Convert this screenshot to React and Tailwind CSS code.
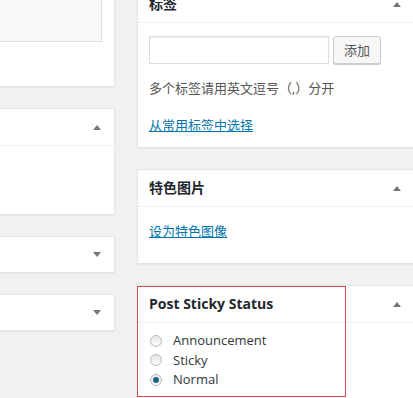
import React from "react";

const font = { fontFamily: '"Open Sans", "Noto Sans CJK SC", sans-serif' };

function Arrow({ up = true }) {
  return up ? (
    <span className="block w-0 h-0 border-x-[4px] border-x-transparent border-b-[5px] border-b-[#72777c]" />
  ) : (
    <span className="block w-0 h-0 border-x-[4px] border-x-transparent border-t-[5px] border-t-[#72777c]" />
  );
}

function Header({ title, up = true, pr = "pr-[15px]" }) {
  return (
    <div className={`h-[37px] border-b border-[#eeeeee] flex items-center justify-between pl-[11px] ${pr}`}>
      <h2 className="text-[14px] font-bold text-[#23282d] leading-none">{title}</h2>
      <Arrow up={up} />
    </div>
  );
}

function Radio({ label, checked }) {
  return (
    <label className="flex items-center h-[19.5px] text-[13px] text-[#32373c]">
      <span className="w-[12px] h-[12px] rounded-full border border-[#b4b9be] bg-gradient-to-b from-[#e6e6e6] to-[#ffffff] flex items-center justify-center shrink-0">
        {checked && <span className="w-[6px] h-[6px] rounded-full bg-[#1e5f8c]" />}
      </span>
      <span className="ml-[11px]">{label}</span>
    </label>
  );
}

export default function App() {
  return (
    <div className="w-[413px] h-[398px] overflow-hidden bg-[#f1f1f1] flex" style={font}>
      {/* left column */}
      <div className="w-[115px] shrink-0 mt-[-20px] flex flex-col gap-[21px]">
        <div className="bg-white border-y border-r border-[#e5e5e5] shadow-[0_1px_1px_rgba(0,0,0,0.04)] pr-[12px] pt-[10px] pb-[44px]">
          <div className="h-[51px] bg-[#f9f9f9] border-b border-r border-[#dddddd]" />
        </div>
        <div className="bg-white border-y border-r border-[#e5e5e5] shadow-[0_1px_1px_rgba(0,0,0,0.04)]">
          <div className="h-[37px] border-b border-[#eeeeee] flex items-center justify-end pr-[13px]">
            <Arrow up />
          </div>
          <div className="h-[68px]" />
        </div>
        <div className="bg-white border-y border-r border-[#e5e5e5] shadow-[0_1px_1px_rgba(0,0,0,0.04)] h-[37px] flex items-center justify-end pr-[13px]">
          <Arrow up={false} />
        </div>
        <div className="bg-white border-y border-r border-[#e5e5e5] shadow-[0_1px_1px_rgba(0,0,0,0.04)] h-[37px] flex items-center justify-end pr-[13px]">
          <Arrow up={false} />
        </div>
      </div>

      {/* right column */}
      <div className="w-[280px] shrink-0 ml-[22px] mt-[-15px] flex flex-col gap-[21px]">
        <div className="bg-white border border-[#e5e5e5] shadow-[0_1px_1px_rgba(0,0,0,0.04)]">
          <Header title="标签" />
          <div className="pl-[11px] pt-[13px] pb-[12px]">
            <div className="flex items-center gap-[4px]">
              <div className="w-[180px] h-[28px] border border-[#dddddd] shadow-[inset_0_1px_2px_rgba(0,0,0,0.07)] bg-white" />
              <button className="w-[48px] h-[28px] border border-[#cccccc] rounded-[3px] bg-[#f7f7f7] shadow-[0_1px_0_#cccccc] text-[13px] text-[#555555] leading-none">
                添加
              </button>
            </div>
            <p className="mt-[14px] text-[13px] leading-[20px] text-[#555555]">多个标签请用英文逗号（,）分开</p>
            <a className="block mt-[17px] text-[13px] leading-[20px] text-[#0073aa] underline">从常用标签中选择</a>
          </div>
        </div>

        <div className="bg-white border border-[#e5e5e5] shadow-[0_1px_1px_rgba(0,0,0,0.04)]">
          <Header title="特色图片" />
          <div className="pl-[11px] pt-[14px] pb-[22px]">
            <a className="block text-[13px] leading-[20px] text-[#0073aa] underline">设为特色图像</a>
          </div>
        </div>

        <div className="relative bg-white border border-[#e5e5e5] shadow-[0_1px_1px_rgba(0,0,0,0.04)]">
          <Header title="Post Sticky Status" />
          <div className="pl-[12px] pt-[8px] pb-[20px]">
            <Radio label="Announcement" />
            <Radio label="Sticky" />
            <Radio label="Normal" checked />
          </div>
          <div className="absolute top-0 left-[-1px] w-[209px] h-[111px] border border-[#d54e4e] pointer-events-none" />
        </div>
      </div>
    </div>
  );
}
